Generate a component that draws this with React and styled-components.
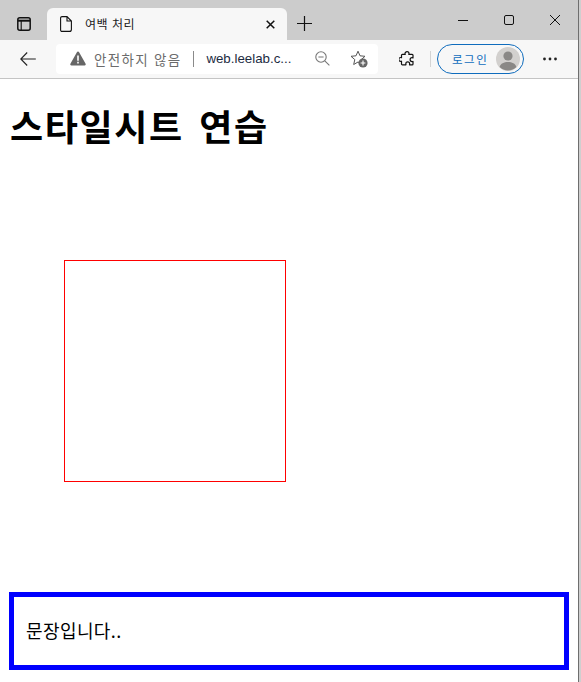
import React from 'react';
import styled, { createGlobalStyle } from 'styled-components';

const Global = createGlobalStyle`
  html, body {
    margin: 0;
    padding: 0;
    background: #fff;
  }
  body {
    font-family: "Liberation Sans", "Noto Sans CJK KR", sans-serif;
    overflow: hidden;
  }
`;

const Window = styled.div`
  width: 581px;
  height: 682px;
  display: flex;
  overflow: hidden;
`;

const Main = styled.div`
  width: 578px;
  display: flex;
  flex-direction: column;
`;

const WindowEdge = styled.div`
  width: 2px;
  flex: none;
  background: #cfcfcf;
  border-left: 1px solid #6e6e6e;
`;

const TitleBar = styled.div`
  height: 40px;
  flex: none;
  background: #cccccc;
  display: flex;
  align-items: flex-end;
  padding-left: 17px;
  box-sizing: border-box;
`;

const TabAction = styled.svg`
  width: 14px;
  height: 14px;
  margin: 0 16px 9px 0;
  flex: none;
`;

const Tab = styled.div`
  width: 240px;
  height: 32px;
  box-sizing: border-box;
  background: #f7f7f7;
  border-radius: 6px 6px 0 0;
  display: flex;
  align-items: center;
  padding: 0 12px 0 13px;
`;

const TabTitle = styled.span`
  flex: 1;
  margin-left: 13px;
  margin-top: -2px;
  font-size: 12px;
  letter-spacing: 0.5px;
  color: #222;
`;

const NewTab = styled.svg`
  width: 15px;
  height: 15px;
  margin: 0 0 9px 10px;
  flex: none;
`;

const WindowControls = styled.div`
  margin-left: auto;
  align-self: flex-start;
  display: flex;
  gap: 36px;
  padding: 15px 18px 0 0;
`;

const Toolbar = styled.div`
  height: 39px;
  flex: none;
  box-sizing: border-box;
  background: #f7f7f7;
  border-bottom: 1px solid #c4c4c4;
  display: flex;
  align-items: center;
  padding: 0 0 1px 20px;
`;

const IconButton = styled.svg`
  width: ${p => p.$w || 16}px;
  height: ${p => p.$h || 16}px;
  margin-left: ${p => p.$ml || 0}px;
  flex: none;
`;

const AddressBar = styled.div`
  width: 322px;
  height: 30px;
  margin-left: 20px;
  background: #fff;
  border-radius: 4px;
  display: flex;
  align-items: center;
  padding-left: 14px;
  box-sizing: border-box;
`;

const Insecure = styled.span`
  margin-left: 8px;
  font-size: 13.5px;
  letter-spacing: 1.3px;
  color: #6b6b6b;
  white-space: nowrap;
`;

const Separator = styled.span`
  width: 1px;
  height: 16px;
  background: ${p => p.$color || '#8a8a8a'};
  margin-left: ${p => p.$ml || 0}px;
  flex: none;
`;

const Url = styled.span`
  margin-left: 12px;
  width: 95px;
  font-size: 13.3px;
  color: #1c2b3f;
  white-space: nowrap;
`;

const LoginPill = styled.div`
  width: 87px;
  height: 30px;
  margin-left: 6px;
  box-sizing: border-box;
  border: 1px solid #0f6cbd;
  border-radius: 15px;
  display: flex;
  align-items: center;
  justify-content: space-between;
  padding: 0 3px 0 14px;
  font-size: 11.5px;
  letter-spacing: 1.5px;
  color: #0f6cbd;
`;

const Avatar = styled.svg`
  width: 24px;
  height: 24px;
  flex: none;
`;

const Page = styled.div`
  flex: 1;
  padding: 0 9px;
`;

const Heading = styled.h1`
  margin: 22px 0 0 1px;
  font-family: "Noto Sans CJK KR", sans-serif;
  font-size: 36px;
  line-height: 48px;
  font-weight: 700;
  color: #000;
  letter-spacing: 1.6px;
  word-spacing: 6px;
`;

const RedBox = styled.div`
  width: 220px;
  height: 220px;
  border: 1px solid red;
  margin: 111px 0 0 55px;
`;

const Sentence = styled.div`
  width: 560px;
  height: 78px;
  box-sizing: border-box;
  margin-top: 110px;
  border: 5px solid blue;
  padding: 0 0 2px 12px;
  display: flex;
  align-items: center;
  font-family: "Noto Sans CJK KR", sans-serif;
  font-size: 18px;
  letter-spacing: 0.4px;
  color: #000;
`;

const App = () => (
  <Window>
    <Global />
    <Main>
      <TitleBar>
        <TabAction viewBox="0 0 14 14" fill="none" stroke="#111" strokeWidth="1.5">
          <rect x="0.8" y="0.8" width="12.4" height="12.4" rx="2" />
          <path d="M1 3.7h12" strokeWidth="2" />
          <path d="M4.2 3.7v9.6" strokeWidth="1.1" />
        </TabAction>
        <Tab>
          <svg width="12" height="16" viewBox="0 0 12 16" fill="none" stroke="#111" strokeWidth="1.1" style={{ flex: 'none' }}>
            <path d="M2 .6h5l4.4 4.4v8.4a2 2 0 0 1-2 2H2a1.4 1.4 0 0 1-1.4-1.4V2A1.4 1.4 0 0 1 2 .6zM7 .6V5h4.4" />
          </svg>
          <TabTitle>여백 처리</TabTitle>
          <svg width="9" height="9" viewBox="0 0 9 9" stroke="#111" strokeWidth="1.5" style={{ flex: 'none' }}>
            <path d="M.7.7l7.6 7.6M8.3.7L.7 8.3" />
          </svg>
        </Tab>
        <NewTab viewBox="0 0 15 15" stroke="#111" strokeWidth="1.2">
          <path d="M7.5 0v15M0 7.5h15" />
        </NewTab>
        <WindowControls>
          <svg width="10" height="10" viewBox="0 0 10 10" stroke="#111" strokeWidth="1"><path d="M0 5.500h10" /></svg>
          <svg width="10" height="10" viewBox="0 0 10 10" fill="none" stroke="#111" strokeWidth="1"><rect x=".5" y=".5" width="9" height="9" rx="1.5" /></svg>
          <svg width="10" height="10" viewBox="0 0 10 10" stroke="#111" strokeWidth="1"><path d="M0 0l10 10M10 0L0 10" /></svg>
        </WindowControls>
      </TitleBar>

      <Toolbar>
        <IconButton viewBox="0 0 16 16" fill="none" stroke="#222" strokeWidth="1.1">
          <path d="M.8 8h15M7.2 1.500L.8 8l6.400 6.500" />
        </IconButton>
        <AddressBar>
          <svg width="16" height="15" viewBox="0 0 16 15" style={{ flex: 'none' }}>
            <path d="M8 .5c.5 0 .9.3 1.1.7l6.500 11.600c.4.8-.1 1.700-1 1.700H1.400c-.9 0-1.400-.9-1-1.700L6.900 1.200C7.100.8 7.500.5 8 .5z" fill="#666" />
            <path d="M7.200 4.500h1.600v5.200H7.200zM7.200 10.800h1.600v1.600H7.200z" fill="#fff" />
          </svg>
          <Insecure>안전하지 않음</Insecure>
          <Separator $ml={12} />
          <Url>web.leelab.c...</Url>
          <IconButton $w={15} $h={15} $ml={14} viewBox="0 0 15 15" fill="none" stroke="#777" strokeWidth="1.1">
            <circle cx="6" cy="6" r="5.2" />
            <path d="M3.400 6h5.200M9.800 9.800l4.600 4.600" />
          </IconButton>
          <IconButton $w={18} $h={18} $ml={20} viewBox="0 0 18 18">
            <path d="M8 1.200l2 4.600 5 .5-3.800 3.300 1.100 4.900L8 12l-4.300 2.500 1.100-4.900L1 6.300l5-.5z" fill="none" stroke="#555" strokeWidth="1" strokeLinejoin="round" />
            <circle cx="13" cy="13" r="4.6" fill="#666" />
            <path d="M13 10.600v4.800M10.600 13h4.800" stroke="#fff" strokeWidth="1.1" />
          </IconButton>
        </AddressBar>
        <IconButton $w={16} $h={16} $ml={21} viewBox="0 0 16 16" fill="none" stroke="#111" strokeWidth="1.2" strokeLinejoin="round">
          <path d="M6 2.600C6 1.400 7 .7 8 .7s2 .7 2 1.900c0 .3-.1.5-.2.8h3.300c.5 0 .9.4.9.9v2.600c-.3-.1-.5-.2-.9-.2-1.100 0-2 .9-2 1.900s.9 2 2 2c.4 0 .6-.1.9-.2v2.500c0 .5-.4.9-.9.9h-2.600c.1-.3.2-.5.2-.9 0-1.100-.9-2-2-2s-1.900.9-1.900 2c0 .4.1.6.2.9H3.400c-.5 0-.9-.4-.9-.9v-2.700c-.3.1-.5.2-.8.2-1.100 0-1.900-.9-1.900-1.900s.8-2 1.900-2c.3 0 .5.1.8.2V4.300c0-.5.4-.9.9-.9h2.800C6.100 3.100 6 2.900 6 2.600z" />
        </IconButton>
        <Separator $ml={15} $color="#d4d4d4" />
        <LoginPill>
          로그인
          <Avatar viewBox="0 0 24 24">
            <circle cx="12" cy="12" r="12" fill="#d2d0ce" />
            <circle cx="12" cy="9" r="4.6" fill="#8a8886" />
            <path d="M3.600 20c1-3.600 4.400-5 8.400-5s7.400 1.400 8.400 5a12 12 0 0 1-16.800 0z" fill="#8a8886" />
          </Avatar>
        </LoginPill>
        <IconButton $w={14} $h={4} $ml={19} viewBox="0 0 14 4" fill="#222">
          <circle cx="1.5" cy="2" r="1.4" />
          <circle cx="7" cy="2" r="1.4" />
          <circle cx="12.500" cy="2" r="1.4" />
        </IconButton>
      </Toolbar>

      <Page>
        <Heading>스타일시트 연습</Heading>
        <RedBox />
        <Sentence>문장입니다..</Sentence>
      </Page>
    </Main>
    <WindowEdge />
  </Window>
);

export default App;
